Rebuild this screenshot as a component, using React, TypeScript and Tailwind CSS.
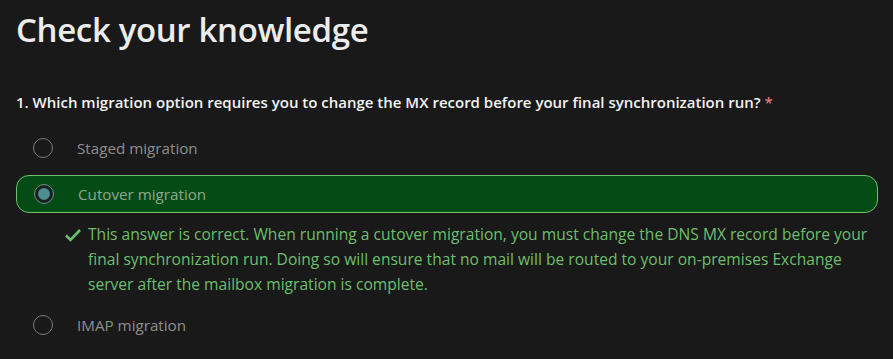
import React from "react";

function Radio({ selected }: { selected?: boolean }) {
  if (selected) {
    return (
      <span className="flex h-[20px] w-[20px] shrink-0 items-center justify-center rounded-full border border-[#6a8f8a] bg-[#1b2a24]">
        <span className="h-[16px] w-[16px] rounded-full border-2 border-[#16201c] bg-[#4e8e8e]" />
      </span>
    );
  }
  return <span className="h-[20px] w-[20px] shrink-0 rounded-full border border-[#7a7a7a]" />;
}

export default function App() {
  return (
    <div
      className="h-[359px] w-[893px] overflow-hidden bg-[#191919] px-[16px]"
      style={{ fontFamily: '"Open Sans", "Noto Sans", sans-serif' }}
    >
      <h1 className="pt-[8px] text-[33px] font-semibold leading-[44px] tracking-[-0.35px] text-[#ececec]">
        Check your knowledge
      </h1>
      <p className="mt-[40px] text-[15px] font-semibold leading-[20px] text-[#f2f2f2]">
        1. Which migration option requires you to change the MX record before your final synchronization run?{" "}
        <span className="text-[#e07a7a]">*</span>
      </p>
      <div className="mt-[17px] flex h-[38px] items-center gap-[24px] pl-[17px]">
        <Radio />
        <span className="text-[15.2px] text-[#8e8e8e]">Staged migration</span>
      </div>
      <div className="mt-[8px] flex h-[38px] w-[862px] items-center gap-[24px] rounded-[13px] border border-[#6fbf6f] bg-[#054b16] pl-[17px]">
        <Radio selected />
        <span className="text-[15.2px] text-[#8ba88f]">Cutover migration</span>
      </div>
      <div className="mt-[9px] flex pl-[48px]">
        <svg width="18" height="14" viewBox="0 0 18 14" className="mr-[6px] mt-[6px] shrink-0">
          <path d="M2 7.5 L6.5 12 L16 2" fill="none" stroke="#6dbf6d" strokeWidth="2.6" />
        </svg>
        <p className="w-[792px] text-[15.6px] leading-[25px] text-[#6dbf6d]">
          This answer is correct. When running a cutover migration, you must change the DNS MX record before your final
          synchronization run. Doing so will ensure that no mail will be routed to your on-premises Exchange server after
          the mailbox migration is complete.
        </p>
      </div>
      <div className="mt-[9px] flex h-[38px] items-center gap-[24px] pl-[17px]">
        <Radio />
        <span className="text-[15.2px] text-[#8e8e8e]">IMAP migration</span>
      </div>
    </div>
  );
}
